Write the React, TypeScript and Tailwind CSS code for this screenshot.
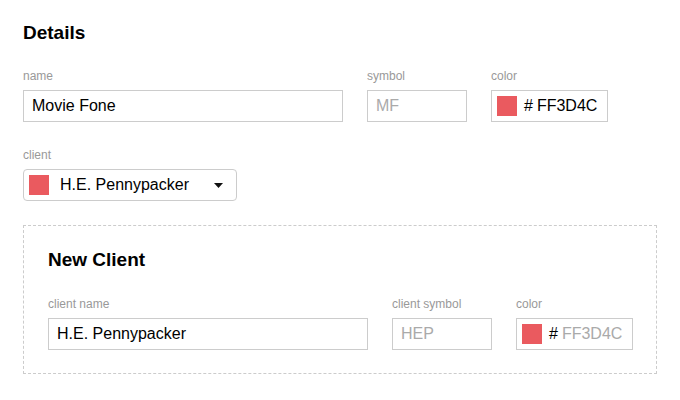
import { ReactNode } from "react";

const font = { fontFamily: '"Liberation Sans", Arial, Helvetica, sans-serif' };

function Field({ label, children, className = "" }: { label: string; children: ReactNode; className?: string }) {
  return (
    <div className={`flex flex-col ${className}`}>
      <label className="text-[12px] leading-[14px] text-[#999] mb-[7px]">{label}</label>
      {children}
    </div>
  );
}

function TextBox({ value, placeholder, width }: { value?: string; placeholder?: string; width: string }) {
  return (
    <input
      readOnly
      defaultValue={value}
      placeholder={placeholder}
      className={`${width} h-[32px] border border-[#cccccc] bg-white px-[8px] text-[16px] text-black placeholder:text-[#aaaaaa] outline-none`}
    />
  );
}

function ColorBox({ hex, muted }: { hex: string; muted?: boolean }) {
  return (
    <div className="w-[117px] h-[32px] border border-[#cccccc] flex items-center pl-[5px] text-[16px]">
      <span className="w-[20px] h-[20px] bg-[#ea5a5f] shrink-0" />
      <span className="ml-[7px] text-black">#</span>
      <span className={`ml-[4px] ${muted ? "text-[#aaaaaa]" : "text-black"}`}>{hex}</span>
    </div>
  );
}

export default function App() {
  return (
    <div className="w-[680px] h-[400px] bg-white pl-[23px] pt-[21px]" style={font}>
      <h2 className="text-[19px] leading-[24px] font-bold text-black">Details</h2>

      <div className="flex gap-[24px] mt-[24px]">
        <Field label="name">
          <TextBox value="Movie Fone" width="w-[320px]" />
        </Field>
        <Field label="symbol">
          <TextBox placeholder="MF" width="w-[100px]" />
        </Field>
        <Field label="color">
          <ColorBox hex="FF3D4C" />
        </Field>
      </div>

      <Field label="client" className="mt-[26px]">
        <div className="w-[214px] h-[32px] border border-[#cccccc] rounded-[4px] flex items-center pl-[5px] pr-[13px] text-[16px] text-black">
          <span className="w-[20px] h-[20px] bg-[#ea5a5f] shrink-0" />
          <span className="ml-[11px] flex-1">H.E. Pennypacker</span>
          <svg width="9" height="5" viewBox="0 0 9 5" className="shrink-0">
            <path d="M0 0h9L4.5 5z" fill="#111" />
          </svg>
        </div>
      </Field>

      <div className="mt-[24px] w-fit border border-dashed border-[#cccccc] pl-[24px] pr-[23px] pt-[22px] pb-[23px]">
        <h3 className="text-[19px] leading-[24px] font-bold text-black">New Client</h3>
        <div className="flex gap-[24px] mt-[25px]">
          <Field label="client name">
            <TextBox value="H.E. Pennypacker" width="w-[320px]" />
          </Field>
          <Field label="client symbol">
            <TextBox placeholder="HEP" width="w-[100px]" />
          </Field>
          <Field label="color">
            <ColorBox hex="FF3D4C" muted />
          </Field>
        </div>
      </div>
    </div>
  );
}
